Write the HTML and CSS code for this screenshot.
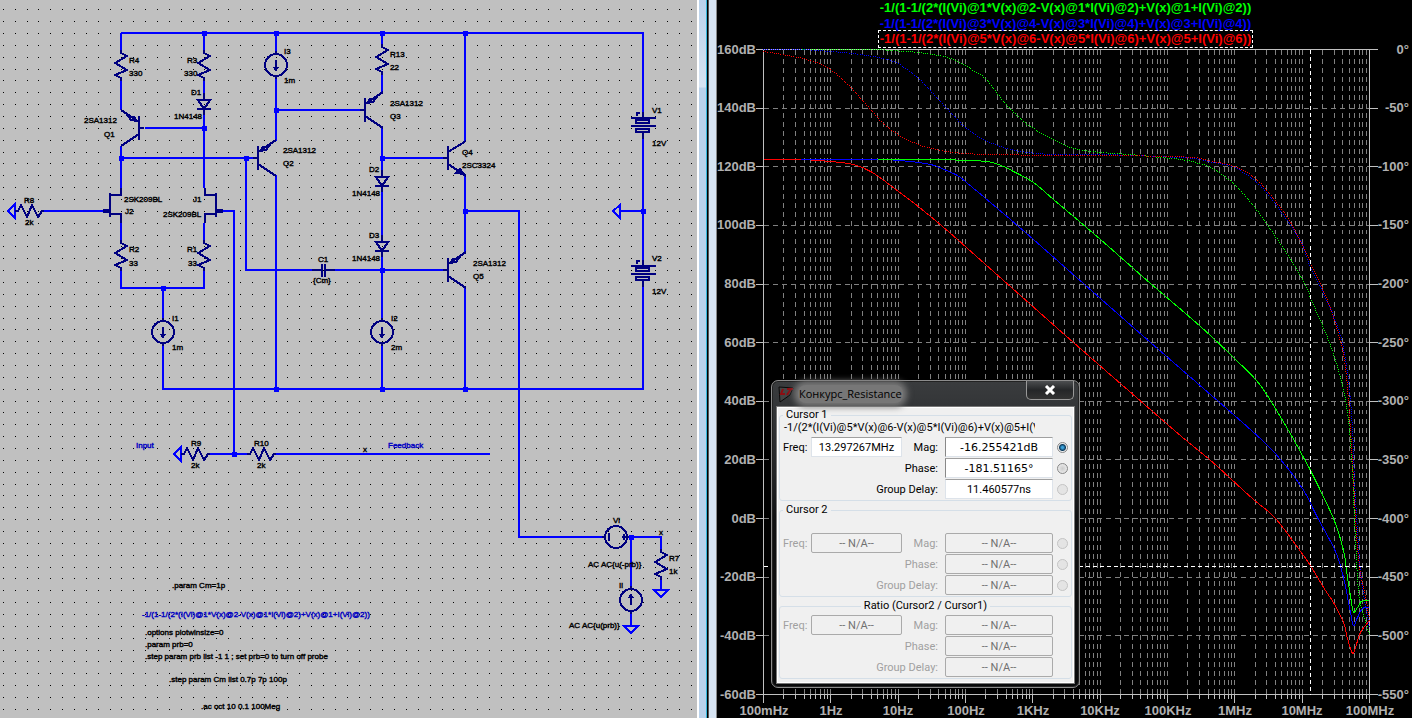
FILE: index.html
```html
<!DOCTYPE html>
<html lang="en">
<head>
<meta charset="utf-8">
<title>Конкурс_Resistance</title>
<link rel="stylesheet" href="styles.css">
</head>
<body>
<main class="workspace">
  <section class="schematic" aria-label="Schematic">
    <svg class="schematic-view" viewBox="0 0 697 718">
      <defs>
        <pattern id="dots" x="38" y="80" width="83" height="83" patternUnits="userSpaceOnUse">
          <path d="M0 .5H83M0 12.5H83M0 24.5H83M0 36.5H83M0 48.5H83M0 60.5H83M0 72.5H83" stroke="#000" stroke-dasharray="1 11"/>
        </pattern>
        <path id="rv" d="M0 -3V0L6 3L-6 10L6 17L-6 22L0 25V28"/>
        <path id="rh" d="M-3 0H0L3 -6L9 6L14 -6L20 6L24 0H26"/>
        <path id="diode" d="M0 -7V0M-6 0H6L0 9ZM-7 9H7M0 9V15"/>
        <path id="pnp" d="M-5 0H0M0 -12V12M18 -18L0 -6M0 6L18 18M2 -7L5 -11L11 -12L8 -8Z"/>
        <path id="npn" d="M-5 0H0M0 -12V12M18 -17L0 -6M0 6L18 18M16 16L12 11L8 15Z"/>
        <g id="jfet"><path d="M0 -18V6M0 -16H11V-23M0 3H11V12"/><path d="M-6 -1H0V1H-6Z" fill="#000080"/></g>
        <g id="isrc"><circle r="11"/><path d="M0 -14V-11M0 11V14M0 -5V6"/><path class="head" d="M-3 2H3L0 7Z"/></g>
        <path id="battery" d="M0 0V6M-12 6H13M-7 8H6V11H-7ZM-12 14H13M-7 17H6V20H-7ZM0 20V27M-6 4V1H-3"/>
        <rect id="node" x="-2" y="-2" width="5" height="5"/>
      </defs>
      <rect class="dots" width="697" height="718"/>
      <g class="wires">
        <path d="M121 33H643V112M121 33V51M204 33V51M121 80V110M204 80V93M204 114V188M145 128H204M121 146V188M121 158H253"/>
        <path d="M44 211H104M121 223V241M204 223V241M121 270V288H204V270M163 288V319M163 345V389H643V287"/>
        <path d="M222 211H234V454M208 454H248M274 454H490M276 33V52M276 78V141M276 110H360M276 175V389M246 158V270H313"/>
        <path d="M334 270H443M382 33V45M382 74V92M382 127V171M382 191V236M382 256V319M382 345V389M382 158H443M465 33V141"/>
        <path d="M465 175V253M465 287V389M465 211H519V537H603M620 211H643M643 139V261M629 537H661V550M661 578V590M631 537V587M631 612V626"/>
        <path d="M8 211L15 204V218ZM174 454L181 447V461ZM613 211L620 205V218ZM654 590H668L661 597ZM624 626H638L631 633Z"/>
      </g>
      <g class="parts">
        <use href="#rv" x="121" y="53"/><use href="#rv" x="204" y="53"/><use href="#rv" x="382" y="47"/>
        <use href="#rv" x="121" y="243"/><use href="#rv" x="204" y="243"/><use href="#rv" x="661" y="552"/>
        <use href="#rh" x="18" y="211"/><use href="#rh" x="184" y="454"/><use href="#rh" x="250" y="454"/>
        <use href="#diode" x="204" y="100"/><use href="#diode" x="382" y="177"/><use href="#diode" x="382" y="242"/>
        <use href="#pnp" x="258" y="158"/><use href="#pnp" x="365" y="110"/><use href="#pnp" x="448" y="270"/>
        <use href="#npn" x="448" y="158"/>
        <use href="#pnp" transform="translate(139 128) scale(-1 1)"/>
        <use href="#jfet" transform="translate(110 211)"/>
        <use href="#jfet" transform="translate(216 211) scale(-1 1)"/>
        <use href="#isrc" x="276" y="65"/><use href="#isrc" x="163" y="332"/><use href="#isrc" x="382" y="332"/>
        <use href="#isrc" transform="translate(631 600) scale(1 -1)"/>
        <circle cx="616" cy="537" r="11"/><path d="M602 537H605M609 533V541M622 537H631M624 534V540"/>
        <path d="M312 270H322M322 264V277M325 264V277M325 270H335"/>
        <use href="#battery" x="643" y="112"/><use href="#battery" x="643" y="260"/>
      </g>
      <g class="nodes">
        <use href="#node" x="204" y="33"/><use href="#node" x="276" y="33"/><use href="#node" x="382" y="33"/><use href="#node" x="465" y="33"/>
        <use href="#node" x="204" y="128"/><use href="#node" x="276" y="110"/><use href="#node" x="121" y="158"/><use href="#node" x="246" y="158"/>
        <use href="#node" x="382" y="158"/><use href="#node" x="465" y="211"/><use href="#node" x="643" y="211"/><use href="#node" x="382" y="270"/>
        <use href="#node" x="163" y="288"/><use href="#node" x="276" y="389"/><use href="#node" x="382" y="389"/><use href="#node" x="465" y="389"/>
        <use href="#node" x="234" y="454"/><use href="#node" x="631" y="537"/>
      </g>
      <g class="labels">
        <text x="129" y="63">R4</text><text x="129" y="76">330</text>
        <text x="187" y="63">R3</text><text x="184" y="76">330</text>
        <text x="191" y="95">D1</text><text x="174" y="119">1N4148</text>
        <text x="84" y="123">2SA1312</text><text x="104" y="137">Q1</text>
        <text x="124" y="202">2SK209BL</text><text x="125" y="214">J2</text>
        <text x="193" y="202">J1</text><text x="163" y="217">2SK209BL</text>
        <text x="24" y="203">R8</text><text x="25" y="225">2k</text>
        <text x="129" y="252">R2</text><text x="129" y="266">33</text>
        <text x="187" y="252">R1</text><text x="188" y="266">33</text>
        <text x="172" y="321">I1</text><text x="172" y="350">1m</text>
        <text x="284" y="54">I3</text><text x="284" y="83">1m</text>
        <text x="390" y="57">R13</text><text x="390" y="70">22</text>
        <text x="390" y="106">2SA1312</text><text x="390" y="119">Q3</text>
        <text x="283" y="153">2SA1312</text><text x="283" y="166">Q2</text>
        <text x="462" y="155">Q4</text><text x="462" y="168">2SC3324</text>
        <text x="369" y="172">D2</text><text x="352" y="196">1N4148</text>
        <text x="369" y="238">D3</text><text x="352" y="261">1N4148</text>
        <text x="318" y="262">C1</text><text x="313" y="283">{Cm}</text>
        <text x="391" y="321">I2</text><text x="391" y="350">2m</text>
        <text x="473" y="266">2SA1312</text><text x="473" y="279">Q5</text>
        <text x="652" y="113">V1</text><text x="652" y="146">12V</text>
        <text x="652" y="261">V2</text><text x="652" y="294">12V</text>
        <text x="191" y="446">R9</text><text x="191" y="468">2k</text>
        <text x="254" y="446">R10</text><text x="257" y="468">2k</text>
        <text x="363" y="452">x</text>
        <text class="net" x="136" y="448">Input</text><text class="net" x="388" y="448">Feedback</text>
        <text x="613" y="523">Vi</text><text x="588" y="567">AC AC{u(-prb)}</text>
        <text x="619" y="588">Ii</text><text x="569" y="628">AC AC{u(prb)}</text>
        <text x="659" y="535">x</text><text x="669" y="561">R7</text><text x="669" y="574">1k</text>
        <text x="172" y="588">.param Cm=1p</text>
        <text class="net" x="142" y="617">-1/(1-1/(2*(I(Vi)@1*V(x)@2-V(x)@1*I(Vi)@2)+V(x)@1+I(Vi)@2))</text>
        <text x="145" y="635">.options plotwinsize=0</text>
        <text x="145" y="647">.param prb=0</text>
        <text x="145" y="659">.step param prb list -1 1 ; set prb=0 to turn off probe</text>
        <text x="169" y="682">.step param Cm list 0.7p 7p 100p</text>
        <text x="201" y="709">.ac oct 10 0.1 100Meg</text>
      </g>
    </svg>
  </section>
  <div class="divider"><div class="edge-left"></div><div class="edge-right"></div></div>
  <section class="plot" aria-label="Waveform plot">
    <ul class="traces">
      <li class="green">-1/(1-1/(2*(I(Vi)@1*V(x)@2-V(x)@1*I(Vi)@2)+V(x)@1+I(Vi)@2))</li>
      <li class="blue">-1/(1-1/(2*(I(Vi)@3*V(x)@4-V(x)@3*I(Vi)@4)+V(x)@3+I(Vi)@4))</li>
      <li class="red selected">-1/(1-1/(2*(I(Vi)@5*V(x)@6-V(x)@5*I(Vi)@6)+V(x)@5+I(Vi)@6))</li>
    </ul>
    <svg class="plot-view" id="plot" viewBox="717 48 695 670"></svg>

    <form class="dialog" aria-label="Конкурс_Resistance">
      <header class="titlebar">
        <svg class="logo" viewBox="0 0 17 17"><path d="M1 1L15 2L12 9L2 16Z" fill="#444" stroke="#0a0a0a"/><path d="M5 3L3 8H7M9 3H15M13 3L9 9" fill="none" stroke="#8d0d12" stroke-width="2"/></svg>
        <h1>Конкурс_Resistance</h1>
        <button class="close" type="button" aria-label="Close"><svg viewBox="0 0 12 10"><path d="M2 1L10 9M10 1L2 9" stroke="#333" stroke-width="4"/><path d="M2 1L10 9M10 1L2 9" stroke="#fff" stroke-width="3"/></svg></button>
      </header>
      <div class="panel">
        <fieldset>
          <legend>Cursor 1</legend>
          <p class="expression">-1/(2*(I(Vi)@5*V(x)@6-V(x)@5*I(Vi)@6)+V(x)@5+I(Vi)@6))</p>
          <div class="fields first">
            <label for="f1">Freq:</label><input id="f1" type="text" value="13.297267MHz" readonly>
            <label class="right" for="m1">Mag:</label><input id="m1" class="large" type="text" value="-16.255421dB" readonly><input type="radio" name="c1" aria-label="Attach to magnitude" checked>
            <label class="wide" for="p1">Phase:</label><input id="p1" class="large" type="text" value="-181.51165°" readonly><input type="radio" name="c1" aria-label="Attach to phase">
            <label class="wide" for="g1">Group Delay:</label><input id="g1" type="text" value="11.460577ns" readonly><input type="radio" name="c1" aria-label="Attach to group delay" disabled>
          </div>
        </fieldset>
        <fieldset disabled>
          <legend>Cursor 2</legend>
          <div class="fields second">
            <label for="f2">Freq:</label><input id="f2" type="text" value="-- N/A--">
            <label class="right" for="m2">Mag:</label><input id="m2" type="text" value="-- N/A--"><input type="radio" name="c2" aria-label="Attach to magnitude">
            <label class="wide" for="p2">Phase:</label><input id="p2" type="text" value="-- N/A--"><input type="radio" name="c2" aria-label="Attach to phase">
            <label class="wide" for="g2">Group Delay:</label><input id="g2" type="text" value="-- N/A--"><input type="radio" name="c2" aria-label="Attach to group delay">
          </div>
        </fieldset>
        <fieldset disabled>
          <legend class="centered">Ratio (Cursor2 / Cursor1)</legend>
          <div class="fields third">
            <label for="f3">Freq:</label><input id="f3" type="text" value="-- N/A--">
            <label class="right" for="m3">Mag:</label><input id="m3" type="text" value="-- N/A--"><span></span>
            <label class="wide" for="p3">Phase:</label><input id="p3" type="text" value="-- N/A--"><span></span>
            <label class="wide" for="g3">Group Delay:</label><input id="g3" type="text" value="-- N/A--"><span></span>
          </div>
        </fieldset>
      </div>
    </form>
  </section>
</main>
<script src="plot.js"></script>
</body>
</html>
```
FILE: styles.css
```css
* { box-sizing: border-box; }
body { margin: 0; background: #000; font-family: "Liberation Sans", Arial, sans-serif; }
.workspace { display: flex; min-height: 100vh; }

.schematic { flex: 697 1 0; min-width: 0; background: #c0c0c0; overflow: hidden; }
.schematic-view { display: block; width: 100%; }
.dots { fill: url(#dots); }
.wires, .parts { fill: none; stroke: #0000ff; stroke-width: 2; shape-rendering: crispEdges; }
.parts { stroke: #000080; }
.head { fill: #000080; stroke: none; }
.nodes { fill: #0000ff; }
.labels { font-size: 8px; fill: #000; stroke: #000; stroke-width: 0.4px; }
.labels .net { fill: #0000c0; stroke: #0000c0; }

.divider { flex: none; width: 20px; display: flex; gap: 1px; background: #000; }
.edge-left { width: 10px; border-left: 2px solid #fff; border-right: 1px solid #35b8dc; background: linear-gradient(#b9d1ea 0, #d7e4f2 87px, #b9d1ea 88px); }
.edge-right { width: 9px; border-left: 1px solid #555; border-right: 1px solid #888; background: #d7e4f2; }

.plot { position: relative; flex: 695 1 0; min-width: 0; background: #000; }
.traces { display: flex; flex-direction: column; align-items: center; height: 48px; margin: 0; padding: 0 0 0 2px; list-style: none; font-size: 13px; font-weight: bold; line-height: 13px; white-space: nowrap; }
.traces li { padding: 0 1px; border: 1px solid transparent; height: 16px; }
.traces .selected { height: 18px; margin-top: -1px; padding-top: 1px; border: 1px dashed #fff; }
.green { color: #00ff00; }
.blue { color: #0000ff; }
.red { color: #ff0000; }
.plot-view { display: block; width: 100%; overflow: visible; }

.grid { stroke: #808080; stroke-dasharray: 5 4; fill: none; shape-rendering: crispEdges; }
.axis { stroke: #c0c0c0; fill: none; shape-rendering: crispEdges; }
.cursor { stroke: #fff; stroke-dasharray: 4 3; fill: none; shape-rendering: crispEdges; }
.curve { fill: none; stroke: currentColor; shape-rendering: crispEdges; }
.phase { fill: currentColor; shape-rendering: crispEdges; }
.axis-label { font-size: 13px; font-weight: bold; fill: #b0b0b0; }
.left, .side { text-anchor: end; }
.bottom { text-anchor: middle; }

.dialog { position: absolute; left: 54px; top: 380px; width: 309px; padding: 0 5px 4px; border: 1px solid #8c8c8c; border-radius: 7px; background: linear-gradient(#3a3c3e, #222426 30%, #101112 45%, #08090a); box-shadow: inset 0 0 0 1px #222; font-family: Roboto, "Liberation Sans", sans-serif; font-size: 11px; }
.titlebar { display: flex; align-items: flex-start; height: 26px; }
.logo { width: 17px; height: 17px; margin: 5px 3px 0 1px; }
.titlebar h1 { margin: 4px 0 0; padding: 0 1px; font: 11px/18px "Open Sans", "Noto Sans", sans-serif; color: #000; background: #777; border-radius: 8px; box-shadow: 0 0 6px 4px #777; }
.close { display: grid; place-items: center; width: 48px; height: 19px; margin-left: auto; padding: 0; border: 1px solid #999; border-top: 0; border-radius: 0 0 5px 5px; background: linear-gradient(#4c4e50, #242628 50%, #333); }
.close svg { width: 12px; height: 10px; }
.panel { padding: 0 1px 3px; border: 1px solid #fff; outline: 1px solid #777; background: #f0f0f0; }
fieldset { min-width: 0; margin: 0 0 2px; padding: 0 0 1px; border: 1px solid #d5dfe8; border-radius: 3px; }
fieldset:last-child { margin: 0; }
legend { margin-left: 3px; padding: 0 3px; line-height: 14px; color: #000; }
.centered { margin: 0 auto; }
.expression { width: 255px; margin: 0; padding-left: 4px; overflow: hidden; white-space: nowrap; line-height: 12px; height: 12px; }
.fields { display: grid; grid-template-columns: 28px 91px 1fr 108px 18px; grid-auto-rows: 20px; row-gap: 1px; align-items: center; padding-left: 3px; }
.first { padding-top: 3px; }
.second { padding-top: 16px; }
.third { padding-top: 2px; }
.right, .wide { padding-right: 7px; text-align: right; }
.wide { grid-column: 1 / 4; }
:disabled label { color: #a0a0a0; }
input[type="text"] { width: 100%; min-width: 0; height: 20px; padding: 0; border: 1px solid #dde3ea; border-top-color: #a0a0a0; background: #fff; color: #000; font: 11px Roboto, "Liberation Sans", sans-serif; text-align: center; }
input.large { border-left-color: #888; font: 11px "DejaVu Sans", sans-serif; }
input[type="text"]:disabled { border: 1px solid #aaa; border-radius: 2px; background: #f0f0f0; color: #707070; }
input[type="radio"] { appearance: none; width: 11px; height: 11px; margin: 0; justify-self: center; border: 1px solid #888; border-radius: 50%; background: radial-gradient(circle, #ccc, #f4f4f4); }
input[type="radio"]:checked { background: radial-gradient(circle, #3aa0d8 0 1px, #0c3a5c 3px, #eee 4px); }
input[type="radio"]:disabled { border-color: #c4c4c4; background: #e4e4e4; }
```
FILE: plot.js
```js
const NS = "http://www.w3.org/2000/svg";
const plot = document.getElementById("plot");
const LEFT = 763.5, RIGHT = 1369.5, TOP = 49.5, BOTTOM = 694.5;
const DECADE = (RIGHT - LEFT) / 9, STEP = (BOTTOM - TOP) / 11;
const snap = v => Math.floor(v) + 0.5;

function path(className, d) {
  const el = document.createElementNS(NS, "path");
  el.setAttribute("class", className);
  el.setAttribute("d", d);
  plot.append(el);
  return el;
}
function label(className, x, y, text) {
  const el = document.createElementNS(NS, "text");
  el.setAttribute("class", "axis-label " + className);
  el.setAttribute("x", x);
  el.setAttribute("y", y);
  el.textContent = text;
  plot.append(el);
}

let grid = "", ticks = "";
for (let d = 0; d < 9; d++) {
  for (let m = 1; m < 10; m++) {
    const x = snap(LEFT + DECADE * (d + Math.log10(m)));
    if (x > LEFT) grid += `M${x} ${TOP}V${BOTTOM}`;
    ticks += `M${x} ${BOTTOM}v${m === 1 ? 8 : 4}`;
  }
}
ticks += `M${RIGHT} ${BOTTOM}v8`;
for (let i = 0; i <= 11; i++) {
  const y = snap(TOP + STEP * i);
  if (i > 0 && i < 11) grid += `M${LEFT} ${y}H${RIGHT}`;
  ticks += `M${LEFT} ${y}h-8M${RIGHT} ${y}h8`;
}
path("grid", grid);
path("axis", `M${LEFT} ${TOP}H${RIGHT}V${BOTTOM}H${LEFT}Z` + ticks);

// Catmull-Rom spline through pixel centres.
const smooth = points => {
  const pts = points.map(([x, y]) => [x + 0.5, y + 0.5]);
  let d = `M${pts[0]}`;
  for (let i = 1; i < pts.length; i++) {
    const a = pts[i - 2] || pts[i - 1], b = pts[i - 1], c = pts[i], e = pts[i + 1] || c;
    d += `C${b[0] + (c[0] - a[0]) / 6} ${b[1] + (c[1] - a[1]) / 6} ${c[0] - (e[0] - b[0]) / 6} ${c[1] - (e[1] - b[1]) / 6} ${c}`;
  }
  return d;
};

// One-pixel dots spaced evenly along the curve.
function dotted(className, points) {
  const el = path(className, smooth(points));
  const total = el.getTotalLength();
  let d = "";
  for (let s = 0; s < total; s += 2.2) {
    const p = el.getPointAtLength(s);
    d += `M${Math.floor(p.x)} ${Math.floor(p.y)}h1v1h-1z`;
  }
  el.setAttribute("d", d);
}

const phase = {
  green: [[800,49],[870,49],[905,51],[918,52],[943,56],[958,61],[973,70],[986,79],[1003,101],[1020,118],[1033,128],[1060,143],[1078,149],[1100,152],[1130,154],[1150,156],[1180,159],[1199,163],[1214,169],[1234,184],[1255,208],[1277,239],[1300,275],[1310,297],[1330,345],[1342,385],[1348,420],[1352,470],[1354,520],[1357,577],[1359,598],[1363,615],[1369,634]],
  blue: [[763,49],[800,49],[830,51],[860,54],[883,58],[899,64],[918,78],[938,99],[950,112],[965,127],[985,140],[1010,149],[1037,153],[1060,154],[1100,154],[1157,156],[1193,158],[1213,162],[1234,167],[1255,181],[1273,201],[1299,239],[1309,264],[1326,300],[1340,335],[1348,380],[1352,430],[1354,480],[1357,530],[1361,580],[1369,627]],
  red: [[763,51],[793,56],[813,61],[830,69],[843,80],[853,90],[872,111],[883,123],[899,135],[918,144],[940,150],[965,153],[993,154],[1060,155],[1127,155],[1157,156],[1193,157],[1213,161],[1234,166],[1255,178],[1273,198],[1287,217],[1299,238],[1310,262],[1325,295],[1337,330],[1344,360],[1348,400],[1350,430],[1352,463],[1355,517],[1357,547],[1360,573],[1365,597],[1369,618]]
};
const magnitude = {
  green: [[878,159],[945,159],[960,160],[987,161],[1003,166],[1013,171],[1033,182],[1053,199],[1100,239],[1150,283],[1200,326],[1235,359],[1260,385],[1288,430],[1303,457],[1311,472],[1333,518],[1343,550],[1347,577],[1351,602],[1353,612],[1357,607],[1361,601],[1369,600]],
  blue: [[800,159],[878,159],[910,161],[930,164],[939,167],[957,175],[966,182],[997,208],[1033,239],[1142,335],[1251,430],[1280,459],[1302,488],[1317,517],[1335,551],[1343,577],[1350,612],[1353,625],[1357,617],[1362,608],[1369,607]],
  red: [[763,159],[800,159],[830,161],[853,164],[872,172],[898,191],[919,207],[957,239],[1065,335],[1174,430],[1209,459],[1230,478],[1253,499],[1275,518],[1303,555],[1311,567],[1325,590],[1333,602],[1343,622],[1347,638],[1352,653],[1355,647],[1360,632],[1369,620]]
};
for (const [color, pts] of Object.entries(phase)) dotted(`phase ${color}`, pts);
for (const color of ["red", "blue", "green"]) path(`curve ${color}`, smooth(magnitude[color]));

path("cursor", `M1310.5 ${TOP}V${BOTTOM}M${LEFT} 566.5H${RIGHT}`);

for (let i = 0; i <= 11; i++) {
  const y = Math.round(TOP + STEP * i) + 4;
  label("left", 756, y, `${160 - 20 * i}dB`);
  label("side", 1409, y, `${-50 * i}°`.replace("-0", "0"));
}
["100mHz", "1Hz", "10Hz", "100Hz", "1KHz", "10KHz", "100KHz", "1MHz", "10MHz", "100MHz"].forEach((t, i) =>
  label("bottom", Math.round(LEFT + DECADE * i), 715, t));
```
